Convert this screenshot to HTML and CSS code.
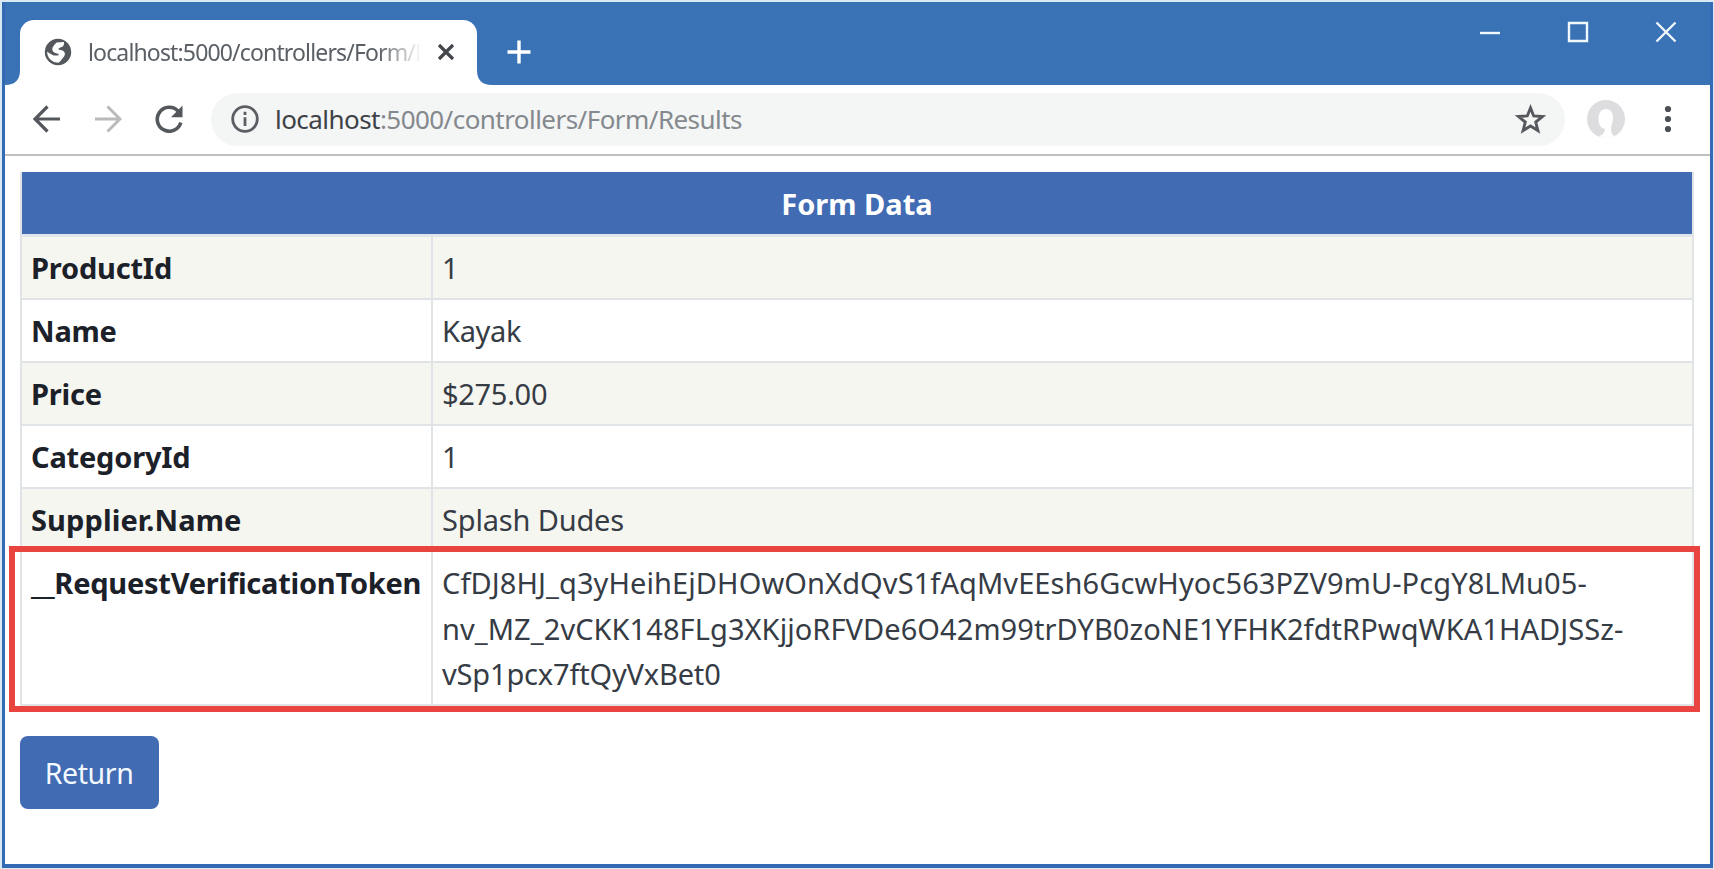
FILE: index.html
```html
<!DOCTYPE html>
<html lang="en">
<head>
<meta charset="utf-8">
<title>localhost:5000/controllers/Form/Results</title>
<link rel="stylesheet" href="styles.css">
</head>
<body>
<div class="window">
  <header class="titlebar">
    <div class="tab">
      <svg class="favicon" viewBox="0 0 28 28"><circle cx="14" cy="14" r="13.2" fill="#54585c"/><path d="M12.5 4.6 L20 4 Q20.6 8.6 16.4 9.4 Q14.2 10 14.4 11.6 L18.5 12.6 Q22 14.6 20.4 18 L16.5 23 L14.5 24.8 L10 24 Q3.4 21 3 13.8 L9.5 17.4 L14.3 17.6 L14.8 16 L10.6 14.8 Q7.4 13 8.6 9.6 Q10 7 12.5 4.6Z" fill="#fff"/></svg>
      <span class="tab-title">localhost:5000/controllers/Form/Results</span>
      <svg class="tab-close" viewBox="0 0 18 18"><path d="M2 2 L16 16 M16 2 L2 16"/></svg>
      <svg class="flare flare-left" viewBox="0 0 15 15"><path d="M15 0 V15 H0 Q15 15 15 0Z"/></svg>
      <svg class="flare flare-right" viewBox="0 0 15 15"><path d="M0 0 V15 H15 Q0 15 0 0Z"/></svg>
    </div>
    <svg class="new-tab" viewBox="0 0 24 24"><path d="M12 0.5 V23.5 M0.5 12 H23.5"/></svg>
    <div class="controls">
      <svg viewBox="0 0 22 22"><path d="M1 12 H21"/></svg>
      <svg viewBox="0 0 22 22"><path d="M2 2 H20 V20 H2Z"/></svg>
      <svg viewBox="0 0 22 22"><path d="M1.5 1.5 L20.5 20.5 M20.5 1.5 L1.5 20.5"/></svg>
    </div>
  </header>
  <nav class="toolbar">
    <svg class="nav-icon" viewBox="0 0 28 28"><path d="M27 14 H2 M14.5 1.5 L2 14 L14.5 26.5"/></svg>
    <svg class="nav-icon disabled" viewBox="0 0 28 28"><path d="M1 14 H26 M13.5 1.5 L26 14 L13.5 26.5"/></svg>
    <svg class="nav-icon reload" viewBox="0 0 28 28"><path d="M25.8 17.5 A12 12 0 1 1 23 6"/><path class="solid" d="M27.5 0.5 V12.2 H16Z"/></svg>
    <div class="address">
      <svg class="info" viewBox="0 0 28 28"><circle cx="14" cy="14" r="12.3"/><path d="M14 12.3 V21 M14 6.8 V10"/></svg>
      <span class="url"><span class="host">localhost</span>:5000/controllers/Form/Results</span>
      <svg class="star" viewBox="0 0 28 28"><path d="M14 3.5 L16.9 10.8 L24.8 11.3 L18.7 16.3 L20.7 24 L14 19.8 L7.3 24 L9.3 16.3 L3.2 11.3 L11.1 10.8Z"/></svg>
    </div>
    <svg class="avatar" viewBox="0 0 38 38"><circle cx="19" cy="19" r="19" fill="#dddcde"/><path d="M19 9 C24 9 26 13 26 18 C26 23 24 25 24 29 Q24 34 27 36 Q23 38 19 38 Q15 38 12 36 Q17 35 18 29 Q11 27 11.5 19 C11.5 13 14 9 19 9Z" fill="#fff"/></svg>
    <svg class="menu" viewBox="0 0 8 28"><circle cx="4" cy="4" r="3.1"/><circle cx="4" cy="14" r="3.1"/><circle cx="4" cy="24" r="3.1"/></svg>
  </nav>
  <main class="page">
    <table class="form-data">
      <thead><tr><th colspan="2">Form Data</th></tr></thead>
      <tbody>
        <tr><th>ProductId</th><td>1</td></tr>
        <tr><th>Name</th><td class="price">Kayak</td></tr>
        <tr><th>Price</th><td class="price">$275.00</td></tr>
        <tr><th>CategoryId</th><td>1</td></tr>
        <tr><th class="supplier">Supplier.Name</th><td class="narrow">Splash Dudes</td></tr>
        <tr class="token"><th>__RequestVerificationToken</th><td><span class="wide">CfDJ8HJ_q3yHeihEjDHOwOnXdQvS1fAqMvEEsh6GcwHyoc563PZV9mU-PcgY8LMu05-</span><br><span class="medium">nv_MZ_2vCKK148FLg3XKjjoRFVDe6O42m99trDYB0zoNE1YFHK2fdtRPwqWKA1HADJSSz-</span><br><span class="narrow">vSp1pcx7ftQyVxBet0</span></td></tr>
      </tbody>
    </table>
    <a class="return">Return</a>
  </main>
  <div class="highlight"></div>
</div>
</body>
</html>
```
FILE: styles.css
```css
* { box-sizing: border-box; }
body { margin: 0; background: #d9e9f3; font-family: "Noto Sans", "Open Sans", sans-serif; }
svg { display: block; flex: none; fill: none; }
.window {
  position: relative;
  width: 1711px;
  height: 866px;
  margin: 2px 0 0 2px;
  border: 3px solid #3469b3;
  border-top: 0;
  border-bottom-width: 4px;
  background: #fff;
  overflow: hidden;
}
.titlebar { display: flex; height: 83px; background: #3972b5; }
.tab {
  position: relative;
  display: flex;
  align-items: center;
  width: 457px;
  height: 65px;
  margin: 18px 0 0 15px;
  padding: 0 20px 2px 24px;
  border-radius: 14px 14px 0 0;
  background: #fff;
}
.favicon { width: 28px; height: 28px; }
.tab-title {
  width: 334px;
  margin: 0 15px 0 16px;
  overflow: hidden;
  white-space: nowrap;
  font-size: 23px;
  letter-spacing: -0.85px;
  color: #5a6066;
  -webkit-mask-image: linear-gradient(90deg, #000 290px, transparent 334px);
  mask-image: linear-gradient(90deg, #000 290px, transparent 334px);
}
.tab-close { width: 18px; height: 18px; stroke: #43474b; stroke-width: 3.2; }
.flare { position: absolute; bottom: 0; width: 15px; height: 15px; fill: #fff; }
.flare-left { left: -15px; }
.flare-right { right: -15px; }
.new-tab { width: 24px; height: 24px; margin: 38px 0 0 30px; stroke: #fff; stroke-width: 3.4; }
.controls { display: flex; gap: 66px; margin: 19px 33px 0 auto; stroke: #f2f8ff; stroke-width: 2.4; }
.controls svg { width: 22px; height: 22px; }
.toolbar {
  display: flex;
  align-items: center;
  height: 71px;
  padding: 0 38px 1px 28px;
  border-bottom: 2px solid #bfc0c1;
}
.nav-icon { width: 28px; height: 28px; margin-right: 33px; stroke: #54585d; stroke-width: 3.2; }
.disabled { stroke: #b9babb; stroke-width: 3; }
.reload { margin-right: 28px; stroke-width: 3.6; }
.solid { fill: #54585d; stroke: none; }
.address {
  display: flex;
  align-items: center;
  width: 1354px;
  height: 53px;
  padding: 0 19px 0 20px;
  border-radius: 27px;
  background: #f4f5f5;
}
.info { width: 28px; height: 28px; stroke: #5b5f64; stroke-width: 2.8; }
.url { margin-left: 16px; font-size: 26px; letter-spacing: -0.55px; color: #84898e; white-space: nowrap; }
.host { color: #3d4247; }
.star { width: 31px; height: 31px; margin-left: auto; stroke: #55595e; stroke-width: 2.6; }
.avatar { width: 38px; height: 38px; margin-left: 22px; }
.menu { width: 8px; height: 28px; margin-left: auto; fill: #4c5055; }
.page { padding: 16px 15px 0 15px; }
.form-data {
  width: 1674px;
  border-left: 2px solid #e1e4e7;
  border-spacing: 0;
  table-layout: auto;
  font-size: 29px;
  line-height: 45.7px;
  color: #363c45;
}
.form-data th, .form-data td {
  height: 63px;
  padding: 8px 0 7px 9px;
  border-right: 2px solid #e1e4e7;
  border-bottom: 2px solid #e1e4e7;
  text-align: left;
  vertical-align: top;
}
.form-data tbody th { width: 411px; font-weight: 700; letter-spacing: -0.2px; color: #1c2129; }
.form-data thead th {
  height: 65px;
  padding: 9px 0 0;
  border-bottom: 3px solid #dfe5ea;
  background: #416bb3;
  background-clip: padding-box;
  font-weight: 700;
  text-align: center;
  color: #fff;
}
.form-data tbody tr:nth-child(odd) { background: #f6f6f0; }
.form-data tbody tr:nth-child(even) { background: #fff; }
.form-data .token td, .form-data .token th { height: 154px; }
.form-data .token th { letter-spacing: -0.24px; }
.form-data .supplier { letter-spacing: 0.1px; }
.wide { letter-spacing: 0.09px; }
.medium { letter-spacing: 0.07px; }
.narrow { letter-spacing: -0.17px; }
.price { letter-spacing: -0.3px; }
.return {
  display: flex;
  align-items: center;
  justify-content: center;
  width: 139px;
  height: 73px;
  margin: 30px 0 0 0;
  padding-right: 1px;
  border-radius: 8px;
  background: #416bb3;
  font-size: 28.5px;
  letter-spacing: -0.4px;
  color: #f4f9ff;
}
.highlight {
  position: absolute;
  left: 4px;
  top: 544px;
  width: 1691px;
  height: 166px;
  border: 6px solid #ea4440;
}
```
